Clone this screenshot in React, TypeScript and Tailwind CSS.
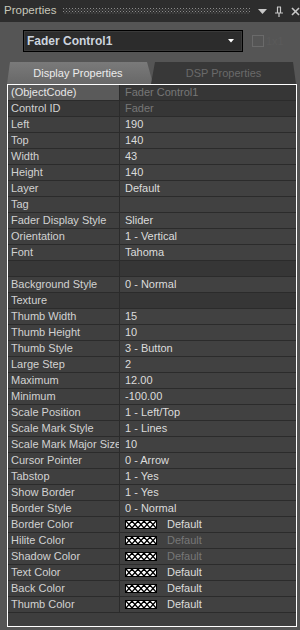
import React from "react";

type Row = {
  label: string;
  value: string;
  dim?: boolean;
  swatch?: boolean;
  selected?: boolean;
  dark?: boolean;
};

const rows: Row[] = [
  { label: "(ObjectCode)", value: "Fader Control1", dim: true, selected: true, dark: true },
  { label: "Control ID", value: "Fader", dim: true, dark: true },
  { label: "Left", value: "190" },
  { label: "Top", value: "140" },
  { label: "Width", value: "43" },
  { label: "Height", value: "140" },
  { label: "Layer", value: "Default" },
  { label: "Tag", value: "" },
  { label: "Fader Display Style", value: "Slider" },
  { label: "Orientation", value: "1 - Vertical" },
  { label: "Font", value: "Tahoma" },
  { label: "", value: "", dark: true },
  { label: "Background Style", value: "0 - Normal" },
  { label: "Texture", value: "", dark: true },
  { label: "Thumb Width", value: "15" },
  { label: "Thumb Height", value: "10" },
  { label: "Thumb Style", value: "3 - Button" },
  { label: "Large Step", value: "2" },
  { label: "Maximum", value: "12.00" },
  { label: "Minimum", value: "-100.00" },
  { label: "Scale Position", value: "1 - Left/Top" },
  { label: "Scale Mark Style", value: "1 - Lines" },
  { label: "Scale Mark Major Size", value: "10" },
  { label: "Cursor Pointer", value: "0 - Arrow" },
  { label: "Tabstop", value: "1 - Yes" },
  { label: "Show Border", value: "1 - Yes" },
  { label: "Border Style", value: "0 - Normal" },
  { label: "Border Color", value: "Default", swatch: true },
  { label: "Hilite Color", value: "Default", swatch: true, dim: true },
  { label: "Shadow Color", value: "Default", swatch: true, dim: true },
  { label: "Text Color", value: "Default", swatch: true },
  { label: "Back Color", value: "Default", swatch: true },
  { label: "Thumb Color", value: "Default", swatch: true },
];

function Swatch() {
  return (
    <svg width="32" height="9" viewBox="0 0 32 9" className="shrink-0">
      <rect x="0.5" y="0.5" width="31" height="8" fill="#ffffff" stroke="#000000" />
      <polyline points="1,1 7,8 13,1 19,8 25,1 31,8" fill="none" stroke="#000" strokeWidth="1.3" />
      <polyline points="1,8 7,1 13,8 19,1 25,8 31,1" fill="none" stroke="#000" strokeWidth="1.3" />
    </svg>
  );
}

export default function App() {
  return (
    <div className="w-[300px] h-[630px] bg-[#555555] overflow-hidden font-['Liberation_Sans',Arial,sans-serif] text-[11px] flex flex-col">
      {/* Title bar */}
      <div className="h-[22px] bg-[#2d2d2d] flex items-center shrink-0">
        <span className="ml-[4px] text-[11.5px] text-[#c8c8ba] leading-none">Properties</span>
        <svg width="187" height="6" className="ml-[7px]">
          <defs>
            <pattern id="dots" width="3" height="3" patternUnits="userSpaceOnUse">
              <rect x="0" y="0" width="1" height="1" fill="#8c8c8c" />
              <rect x="1.5" y="1.5" width="1" height="1" fill="#6c6c6c" />
            </pattern>
          </defs>
          <rect width="187" height="6" fill="url(#dots)" />
        </svg>
        <svg width="9" height="6" viewBox="0 0 9 6" className="ml-[8px] mt-[2px]">
          <polygon points="0,0 9,0 4.5,5" fill="#c8c8c8" />
        </svg>
        <svg width="10" height="11" viewBox="0 0 10 11" className="ml-[7px]">
          <path d="M3 1h4M3.5 1v6M6.5 1v6M1 7h8M5 7v4" stroke="#c8c8c8" strokeWidth="1.2" fill="none" />
        </svg>
        <svg width="9" height="9" viewBox="0 0 9 9" className="ml-[7px]">
          <path d="M1 1L8 8M8 1L1 8" stroke="#c8c8c8" strokeWidth="1.6" />
        </svg>
      </div>

      {/* Combo row */}
      <div className="flex items-center mt-[8px] h-[22px] shrink-0">
        <div className="ml-[23px] w-[220px] h-[22px] border border-black bg-[#2c2c2c] flex items-center relative">
          <div className="absolute inset-0 border border-[#3a3a3a]" />
          <span className="ml-[3px] text-[12px] font-bold text-[#cdd4de]">Fader Control1</span>
          <svg width="6" height="4" viewBox="0 0 6 4" className="ml-auto mr-[8px]">
            <polygon points="0,0 6,0 3,3.5" fill="#ffffff" />
          </svg>
        </div>
        <div className="ml-[9px] w-[12px] h-[12px] border border-[#6a6a6a]" />
        <span className="ml-[2px] text-[11px] text-[#5a5a5a]">1x1</span>
      </div>

      {/* Tabs */}
      <div className="flex mt-[10px] h-[22px] shrink-0 ml-[7px]">
        <div className="w-[146px] h-[22px] bg-gradient-to-b from-[#7a7a7a] to-[#686868] [clip-path:polygon(3px_0,140px_0,146px_100%,0_100%)] flex items-center justify-center text-[#ececec] text-[11px] pr-[4px]">
          Display Properties
        </div>
        <div className="-ml-[2px] w-[145px] h-[22px] bg-[#383838] [clip-path:polygon(4px_0,142px_0,145px_100%,0_100%)] flex items-center justify-center text-[#6a6a6a] text-[11px]">
          DSP Properties
        </div>
      </div>

      {/* Grid */}
      <div className="ml-[7px] w-[290px] h-[543px] border border-white bg-[#3e3e3e] flex flex-col shrink-0">
        {rows.map((r, i) => (
          <div key={i} className="h-[16px] flex border-b border-[#2b2b2b] shrink-0">
            <div
              className={
                "w-[112px] border-r border-[#2b2b2b] flex items-center pl-[3px] whitespace-nowrap overflow-hidden " +
                (r.selected ? "bg-[#5a5a5a] text-[#e6e6e6]" : r.dark ? "bg-[#383838] text-[#d2d2d2]" : "bg-[#3f3f3f] text-[#d2d2d2]")
              }
            >
              {r.label}
            </div>
            <div
              className={
                "flex-1 flex items-center pl-[5px] whitespace-nowrap overflow-hidden " +
                (r.dark ? "bg-[#363636] " : "bg-[#414141] ") +
                (r.dim ? "text-[#777777]" : "text-[#dcdcdc]")
              }
            >
              {r.swatch && <Swatch />}
              {r.swatch ? <span className="ml-[10px]">{r.value}</span> : r.value}
            </div>
          </div>
        ))}
      </div>
    </div>
  );
}
